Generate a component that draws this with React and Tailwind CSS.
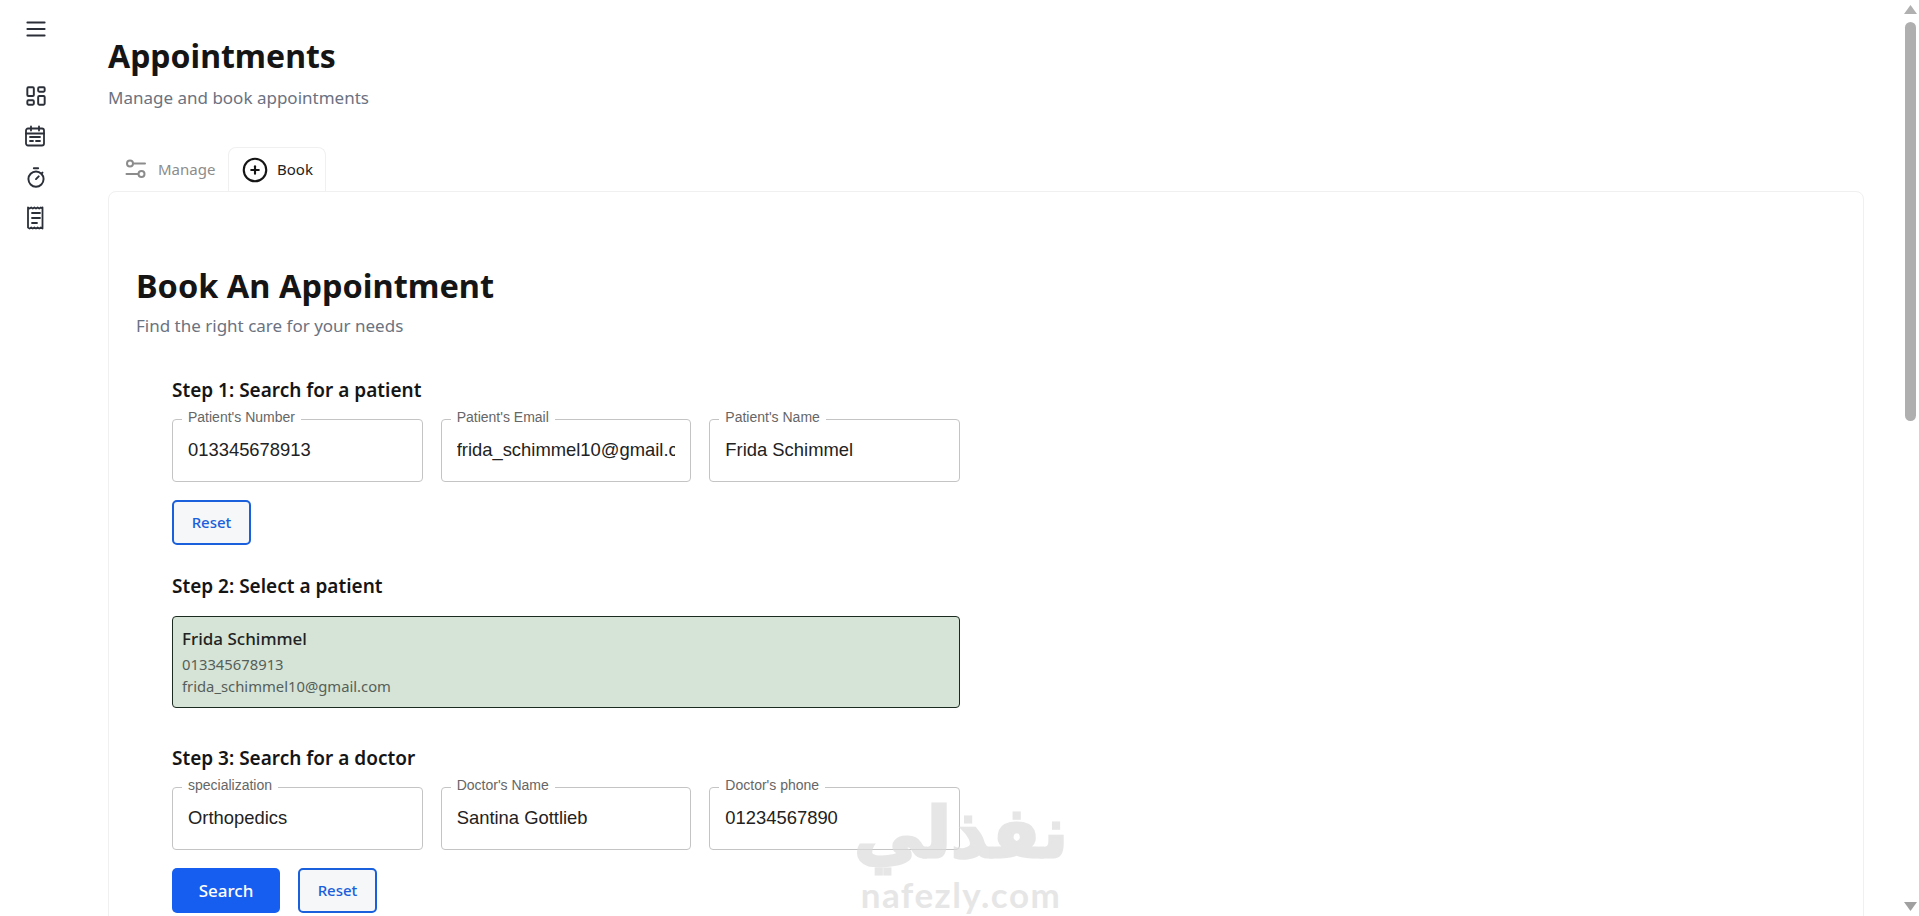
import { TbMenu2, TbLayoutDashboard, TbStopwatch, TbCirclePlus } from 'react-icons/tb';

const CalendarIcon = () => (
    <svg width="24" height="24" viewBox="0 0 24 24" fill="none" stroke="#2b2f38" strokeWidth="1.8" strokeLinecap="round" strokeLinejoin="round">
        <rect x="3" y="4.500" width="18" height="17" rx="2" />
        <path d="M8 2.500v4M16 2.500v4M3 9.500h18M7 13h10M7 17h3M13 17h4" />
    </svg>
);

const ReceiptIcon = () => (
    <svg width="24" height="24" viewBox="0 0 24 24" fill="none" stroke="#2b2f38" strokeWidth="1.800" strokeLinecap="round" strokeLinejoin="round" className="translate-x-px">
        <path d="M4 1.500l1.600 1 1.600-1 1.600 1 1.600-1 1.600 1 1.600-1 1.600 1 1.600-1 1.600 1 .1-1v21l-1.700-1-1.600 1-1.600-1-1.600 1-1.600-1-1.600 1-1.600-1-1.600 1-1.600-1V1.500z" />
        <path d="M8 7h8M8 12h8M8 17h5" />
    </svg>
);

const SlidersIcon = () => (
    <svg width="24" height="24" viewBox="0 0 24 24" fill="none" stroke="#8c8c8c" strokeWidth="2" strokeLinecap="round">
        <circle cx="6" cy="6.500" r="3" />
        <path d="M9.500 6.500h11.500" />
        <circle cx="17.500" cy="17" r="3" />
        <path d="M2.500 17h11.500" />
    </svg>
);

const Field = ({ label, value }) => (
    <fieldset className="w-[251px] h-[71px] rounded border border-[#c4c4c4] px-[15px] min-w-0 font-['Liberation_Sans',sans-serif]">
        <legend className="ml-[-6px] px-1.5 text-sm leading-4 text-[#666666]">
            <span className="block -translate-y-0.5">{label}</span>
        </legend>
        <input
            readOnly
            value={value}
            className="w-full h-[50px] -mt-0.5 bg-transparent text-[18.4px] text-[#222222] outline-none"
        />
    </fieldset>
);

const ResetButton = () => (
    <button className="w-[79px] h-[45px] rounded-[5px] border-2 border-[#1a5fdc] bg-[#f6f7f9] text-[15px] font-medium text-[#1a5fdc]">
        Reset
    </button>
);

const StepTitle = ({ children }) => (
    <h3 className="text-[19px] leading-6 font-semibold text-[#151515]">{children}</h3>
);

export default function App() {
    return (
        <div className="relative flex h-[916px] overflow-hidden bg-white font-['Noto_Sans',sans-serif]">
            <aside className="w-[72px] shrink-0 flex flex-col items-center pt-4">
                <TbMenu2 size={26} color="#2b2f38" strokeWidth={1.7} />
                <div className="mt-[41px] flex flex-col gap-[15px]">
                    <TbLayoutDashboard size={26} color="#2b2f38" strokeWidth={1.8} />
                    <CalendarIcon />
                    <TbStopwatch size={26} color="#2b2f38" strokeWidth={1.8} className="mt-0.5" />
                    <ReceiptIcon />
                </div>
            </aside>

            <main className="flex-1 min-w-0 pl-9 pr-[38px] pt-[33px]">
                <h1 className="text-[32px] leading-[48px] font-bold text-[#151515] -mt-[1px]">Appointments</h1>
                <p className="text-[17px] leading-6 text-[#6b7280] mt-1.5">Manage and book appointments</p>

                <div className="flex mt-[37px] h-[44px] text-[15px]">
                    <div className="w-[120px] flex items-center gap-2.5 pl-4 text-[#8c8c8c]">
                        <SlidersIcon />
                        <span>Manage</span>
                    </div>
                    <div className="w-[98px] flex items-center gap-[7px] pl-[11px] rounded-t-lg border border-b-0 border-[#f0f0f0] text-[#222222]">
                        <TbCirclePlus size={30} color="#151515" strokeWidth={1.7} />
                        <span>Book</span>
                    </div>
                </div>

                <section className="h-[1400px] rounded-lg border border-[#f0f0f0] pl-[27px] pt-[69px]">
                    <h2 className="text-[32.5px] leading-[50px] font-bold text-[#151515]">Book An Appointment</h2>
                    <p className="text-[17px] leading-6 text-[#6b7280] mt-[3px]">Find the right care for your needs</p>

                    <div className="pl-9 mt-[40px] w-[824px]">
                        <StepTitle>Step 1: Search for a patient</StepTitle>
                        <div className="flex gap-[18px] mt-[9px]">
                            <Field label="Patient's Number" value="013345678913" />
                            <Field label="Patient's Email" value="frida_schimmel10@gmail.com" />
                            <Field label="Patient's Name" value="Frida Schimmel" />
                        </div>
                        <div className="mt-[18px]">
                            <ResetButton />
                        </div>

                        <div className="mt-[29px]">
                            <StepTitle>Step 2: Select a patient</StepTitle>
                        </div>
                        <div className="mt-[18px] h-[92px] rounded border border-[#1c2b20] bg-[#d5e4d6] px-[9px] pt-[10px]">
                            <p className="text-[17px] leading-6 font-medium text-[#222222]">Frida Schimmel</p>
                            <p className="text-[14.800px] leading-[22px] mt-0.5 text-[#555f5a]">013345678913</p>
                            <p className="text-[14.800px] leading-[22px] text-[#555f5a]">frida_schimmel10@gmail.com</p>
                        </div>

                        <div className="mt-[38px]">
                            <StepTitle>Step 3: Search for a doctor</StepTitle>
                        </div>
                        <div className="flex gap-[18px] mt-[9px]">
                            <Field label="specialization" value="Orthopedics" />
                            <Field label="Doctor's Name" value="Santina Gottlieb" />
                            <Field label="Doctor's phone" value="01234567890" />
                        </div>
                        <div className="flex gap-[18px] mt-[18px]">
                            <button className="w-[108px] h-[45px] rounded-[5px] bg-[#155eef] text-[17px] font-medium text-white">
                                Search
                            </button>
                            <ResetButton />
                        </div>
                    </div>
                </section>
            </main>

            <div className="w-[17px] shrink-0 flex flex-col items-center">
                <svg width="13" height="10" viewBox="0 0 13 10" className="mt-[5px] mb-[7px]">
                    <path d="M6.500 0L13 9H0z" fill="#b0b0b0" />
                </svg>
                <div className="w-[11px] h-[399px] rounded-full bg-[#afafaf]" />
                <svg width="13" height="10" viewBox="0 0 13 10" className="mt-auto mb-[4px]">
                    <path d="M0 0h13L6.500 9z" fill="#a0a0a0" />
                </svg>
            </div>

            <div className="absolute left-[848px] top-[793px] w-[226px] flex flex-col items-center pointer-events-none text-[#dcdcdc] opacity-70">
                <span dir="rtl" className="text-[70px] leading-[80px] font-bold [-webkit-text-stroke:3px_#dcdcdc] font-['DejaVu_Sans',sans-serif]">نفذلي</span>
                <span className="text-[35px] leading-[42px] font-bold tracking-[1.5px] font-['Lato',sans-serif]">nafezly.com</span>
            </div>
        </div>
    );
}
